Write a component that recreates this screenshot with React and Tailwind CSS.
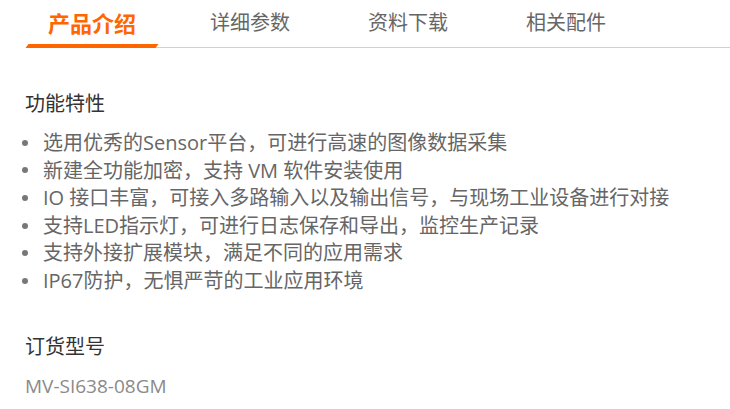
import React from 'react';

const tabs = ['产品介绍', '详细参数', '资料下载', '相关配件'];

const features = [
  '选用优秀的Sensor平台，可进行高速的图像数据采集',
  '新建全功能加密，支持 VM 软件安装使用',
  'IO 接口丰富，可接入多路输入以及输出信号，与现场工业设备进行对接',
  '支持LED指示灯，可进行日志保存和导出，监控生产记录',
  '支持外接扩展模块，满足不同的应用需求',
  'IP67防护，无惧严苛的工业应用环境',
];

export default function App() {
  return (
    <div
      className="w-[730px] h-[409px] bg-white overflow-hidden"
      style={{ fontFamily: '"Open Sans", "Noto Sans CJK SC", sans-serif' }}
    >
      {/* Tabs */}
      <div className="ml-[26px] flex gap-[26px] border-b border-[#d0d0d0]">
        {tabs.map((t, i) => (
          <div key={t} className="relative w-[132px] h-[47px] flex justify-center pt-[9px]">
            {i === 0 ? (
              <span className="text-[22px] leading-[28px] font-bold text-[#ff6600]">{t}</span>
            ) : (
              <span className="text-[20px] leading-[28px] text-[#666]">{t}</span>
            )}
            {i === 0 && (
              <div className="absolute left-[1px] right-[1px] bottom-[-1px] h-[4px] bg-[#ff6600] -skew-x-[37deg]" />
            )}
          </div>
        ))}
      </div>

      {/* Body */}
      <div className="px-[25px] pt-[42px]">
        <h3 className="text-[20px] leading-[28px] text-[#333]">功能特性</h3>
        <ul className="mt-[11px]">
          {features.map((f) => (
            <li key={f} className="flex items-center text-[20px] leading-[27.6px] text-[#666]">
              <span className="w-[6px] h-[6px] rounded-full bg-[#777] ml-[-3px] mr-[15px] shrink-0" />
              <span>{f}</span>
            </li>
          ))}
        </ul>
        <h3 className="mt-[38px] text-[20px] leading-[28px] text-[#333]">订货型号</h3>
        <p className="mt-[11px] text-[19px] leading-[28px] text-[#8a8a8a]">MV-SI638-08GM</p>
      </div>
    </div>
  );
}
